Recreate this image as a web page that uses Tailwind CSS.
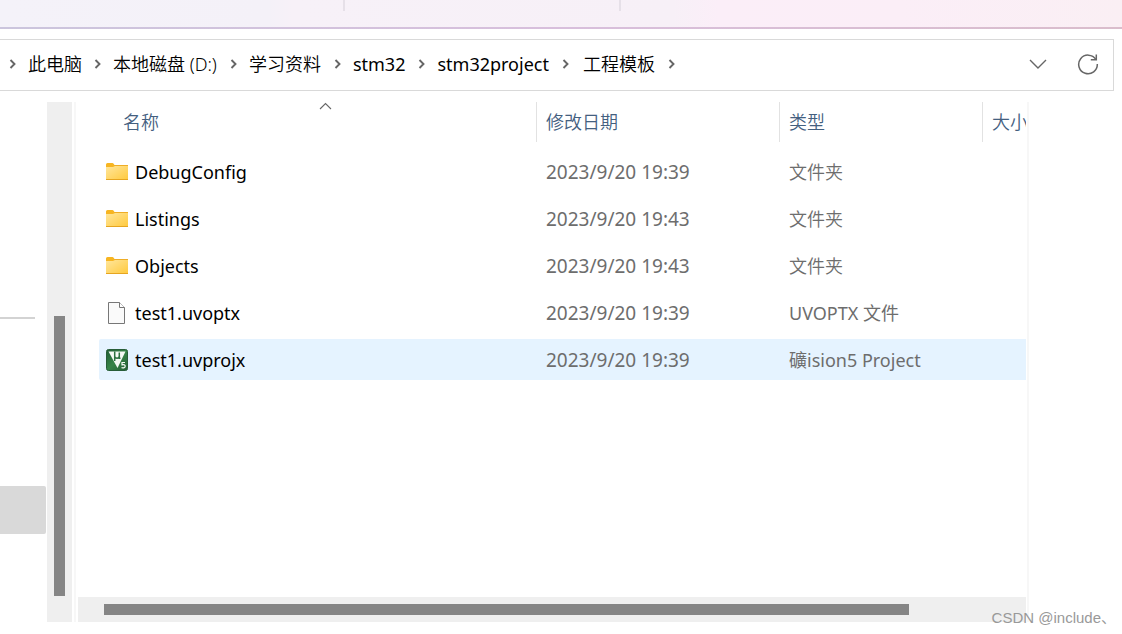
<!DOCTYPE html>
<html lang="zh-CN">
<head>
<meta charset="utf-8">
<title>工程模板</title>
<script src="https://cdn.jsdelivr.net/npm/@tailwindcss/browser@4"></script>
</head>
<body class="relative flex h-screen flex-col overflow-hidden bg-white pb-3 font-['Noto_Sans','Noto_Sans_CJK_SC',sans-serif] text-[18px] leading-6 text-black">
<svg class="absolute h-0 w-0" aria-hidden="true">
  <defs>
    <linearGradient id="fold" x1="0" y1="0" x2="1" y2="1"><stop offset="0" stop-color="#ffe69c"/><stop offset="1" stop-color="#ffc93c"/></linearGradient>
    <linearGradient id="green" x1="0" y1="0" x2="1" y2="1"><stop offset="0" stop-color="#1f5c33"/><stop offset=".5" stop-color="#378448"/><stop offset="1" stop-color="#245f36"/></linearGradient>
    <symbol id="chev" viewBox="0 0 8 10"><path d="M1.5 1L5.5 5L1.5 9" fill="none" stroke="#666" stroke-width="1.9"/></symbol>
    <symbol id="folder" viewBox="0 0 22 18"><path d="M0 3V1.5Q0 0 1.5 0H6.3Q7.3 0 7.8 1L8.5 2H22V5H0Z" fill="#f7b521"/><path d="M0 4H7L9 3H22V17H0Z" fill="url(#fold)"/><path d="M0 16.5H22" stroke="#e6a520" stroke-width="1"/><path d="M8.5 2.5H22" stroke="#eead27" stroke-width="1"/></symbol>
  </defs>
</svg>

<header class="shrink-0">
  <div class="flex h-[27px] items-start bg-[linear-gradient(to_right,#f4f2f9_0%,#f4f1f8_24%,#f7f1f8_26%,#f7f0f7_60%,#fbeef8_64%,#fbeef7_80%,#faeff4_100%)]">
    <span class="ml-[343px] h-[11px] w-0.5 bg-[#e6e0e8]"></span>
    <span class="ml-[274px] h-[11px] w-0.5 bg-[#e6e0e8]"></span>
  </div>
  <div class="h-0.5 bg-linear-to-r from-[#cbc5dd] via-[#d8bfdc] to-[#dabdcc]"></div>
</header>

<nav aria-label="地址栏" class="mt-[10px] mr-2 flex h-[52px] shrink-0 items-center border border-l-0 border-[#d9d9d9] pb-0.5 pl-[9px]">
  <svg class="h-[10px] w-2 shrink-0"><use href="#chev"/></svg>
  <a href="#" class="ml-[11px] font-[350] whitespace-nowrap">此电脑</a>
  <svg class="ml-3 h-[10px] w-2 shrink-0"><use href="#chev"/></svg>
  <a href="#" class="ml-[11px] font-[350] whitespace-nowrap">本地磁盘 (D:)</a>
  <svg class="ml-[13px] h-[10px] w-2 shrink-0"><use href="#chev"/></svg>
  <a href="#" class="ml-[11px] font-[350] whitespace-nowrap">学习资料</a>
  <svg class="ml-[13px] h-[10px] w-2 shrink-0"><use href="#chev"/></svg>
  <a href="#" class="ml-[11px] whitespace-nowrap">stm32</a>
  <svg class="ml-[13px] h-[10px] w-2 shrink-0"><use href="#chev"/></svg>
  <a href="#" class="ml-[11px] whitespace-nowrap">stm32project</a>
  <svg class="ml-[13px] h-[10px] w-2 shrink-0"><use href="#chev"/></svg>
  <a href="#" class="ml-[13px] font-[350] whitespace-nowrap">工程模板</a>
  <svg class="ml-[13px] h-[10px] w-2 shrink-0"><use href="#chev"/></svg>
  <button aria-label="展开" class="mr-[29px] ml-auto"><svg width="20" height="12" viewBox="0 0 20 12"><path d="M2 2L10 10L18 2" fill="none" stroke="#666" stroke-width="1.4"/></svg></button>
  <button aria-label="刷新" class="mr-[14px]"><svg width="22" height="22" viewBox="0 0 22 22" fill="none" stroke="#666" stroke-width="1.5"><path d="M18.9 6.5A9.3 9.3 0 1 0 20.3 11"/><path d="M19.3 1.5V6.8H13.8"/></svg></button>
</nav>

<div class="mt-[11px] flex min-h-0 flex-1">
  <aside class="flex w-[47px] shrink-0 flex-col pt-[215px]">
    <div class="h-0.5 w-[35px] bg-[#d3d3d3]"></div>
    <div class="mt-[167px] h-12 w-[46px] rounded-r-xs bg-[#d9d9d9]"></div>
  </aside>
  <div class="w-[25px] shrink-0 bg-[#efefef] pt-[214px] pl-[7px]"><div class="h-[280px] w-[11px] bg-[#858585]"></div></div>
  <div class="ml-0.5 w-0.5 shrink-0 bg-[#f7f7f7]"></div>
  <main class="ml-0.5 flex min-w-0 flex-1 flex-col">
    <div class="min-h-0 flex-1 overflow-hidden pl-[21px]">
      <table class="w-full table-fixed border-separate border-spacing-0 text-left whitespace-nowrap">
        <colgroup><col><col class="w-[243px]"><col class="w-[203px]"><col class="w-[44px]"></colgroup>
        <thead class="text-[#44607f]">
          <tr>
            <th class="h-[46px] p-0 align-top font-[350]"><div class="relative flex h-10 items-center pl-6">名称<svg class="absolute top-0 left-[220px]" width="13" height="8" viewBox="0 0 13 8"><path d="M1 7L6.500 1.500L12 7" fill="none" stroke="#666" stroke-width="1.1"/></svg></div></th>
            <th class="p-0 align-top font-[350]"><div class="flex h-10 items-center border-l border-[#e2e2e2] pl-[9px]">修改日期</div></th>
            <th class="p-0 align-top font-[350]"><div class="flex h-10 items-center border-l border-[#e2e2e2] pl-[9px]">类型</div></th>
            <th class="p-0 align-top font-[350]"><div class="flex h-10 items-center overflow-hidden border-l border-[#e2e2e2] pl-[9px]">大小</div></th>
          </tr>
        </thead>
        <tbody class="text-[#6d6d6d]">
          <tr>
            <td class="px-0 py-[3px]"><div class="flex h-[41px] items-center gap-[7px] pl-[7px] text-black"><svg class="h-[18px] w-[22px]"><use href="#folder"/></svg>DebugConfig</div></td>
            <td class="px-0 py-[3px]"><div class="flex h-[41px] items-center pl-[10px] text-[19px]">2023/9/20 19:39</div></td>
            <td class="px-0 py-[3px]"><div class="flex h-[41px] items-center pl-[10px] font-[350]">文件夹</div></td>
            <td class="px-0 py-[3px]"></td>
          </tr>
          <tr>
            <td class="px-0 py-[3px]"><div class="flex h-[41px] items-center gap-[7px] pl-[7px] text-black"><svg class="h-[18px] w-[22px]"><use href="#folder"/></svg>Listings</div></td>
            <td class="px-0 py-[3px]"><div class="flex h-[41px] items-center pl-[10px] text-[19px]">2023/9/20 19:43</div></td>
            <td class="px-0 py-[3px]"><div class="flex h-[41px] items-center pl-[10px] font-[350]">文件夹</div></td>
            <td class="px-0 py-[3px]"></td>
          </tr>
          <tr>
            <td class="px-0 py-[3px]"><div class="flex h-[41px] items-center gap-[7px] pl-[7px] text-black"><svg class="h-[18px] w-[22px]"><use href="#folder"/></svg>Objects</div></td>
            <td class="px-0 py-[3px]"><div class="flex h-[41px] items-center pl-[10px] text-[19px]">2023/9/20 19:43</div></td>
            <td class="px-0 py-[3px]"><div class="flex h-[41px] items-center pl-[10px] font-[350]">文件夹</div></td>
            <td class="px-0 py-[3px]"></td>
          </tr>
          <tr>
            <td class="px-0 py-[3px]"><div class="flex h-[41px] items-center gap-[7px] pl-[7px] text-black"><svg width="22" height="22" viewBox="0 0 22 22"><path d="M2.500 .5H13.500L18.500 5.500V21.500H2.500Z" fill="#fafafa" stroke="#777"/><path d="M13.500 .5V5.500H18.500" fill="#fff" stroke="#777"/></svg>test1.uvoptx</div></td>
            <td class="px-0 py-[3px]"><div class="flex h-[41px] items-center pl-[10px] text-[19px]">2023/9/20 19:39</div></td>
            <td class="px-0 py-[3px]"><div class="flex h-[41px] items-center pl-[10px]">UVOPTX 文件</div></td>
            <td class="px-0 py-[3px]"></td>
          </tr>
          <tr>
            <td class="px-0 py-[3px]"><div class="flex h-[41px] items-center gap-[7px] rounded-l-xs bg-[#e5f3ff] pl-[7px] text-black"><svg width="22" height="22" viewBox="0 0 22 22"><rect x=".5" y=".5" width="21" height="21" rx="2" fill="url(#green)" stroke="#285d38"/><path d="M2.500 2.500H19.500L11.500 19Z" fill="#f5faf5"/><path d="M8.700 2.500V12M8.700 7.500Q9 9.200 11 9.200Q13.300 9.200 13.300 7V3.500M13.300 7V9.300H14.500" fill="none" stroke="#2d7140" stroke-width="1.500"/><path d="M19 13.500H16V15.800Q19.200 15.200 19.200 17.200Q19 19.300 15.500 18.700" fill="none" stroke="#f5faf5" stroke-width="1.200"/></svg>test1.uvprojx</div></td>
            <td class="px-0 py-[3px]"><div class="flex h-[41px] items-center bg-[#e5f3ff] pl-[10px] text-[19px]">2023/9/20 19:39</div></td>
            <td class="px-0 py-[3px]"><div class="flex h-[41px] items-center bg-[#e5f3ff] pl-[10px]">礦ision5 Project</div></td>
            <td class="px-0 py-[3px]"><div class="h-[41px] bg-[#e5f3ff]"></div></td>
          </tr>
        </tbody>
      </table>
    </div>
    <div class="flex h-[25px] shrink-0 items-center bg-[#efefef] pr-[117px] pl-[26px]"><div class="h-[11px] flex-1 bg-[#858585]"></div></div>
  </main>
  <div class="mr-[93px] ml-px w-0.5 shrink-0 bg-[#f7f7f7]"></div>
</div>
<div class="absolute right-1.5 bottom-1 font-['Liberation_Sans','Noto_Sans_CJK_SC',sans-serif] text-[15px] text-[#999]">CSDN @include、</div>
</body>
</html>
